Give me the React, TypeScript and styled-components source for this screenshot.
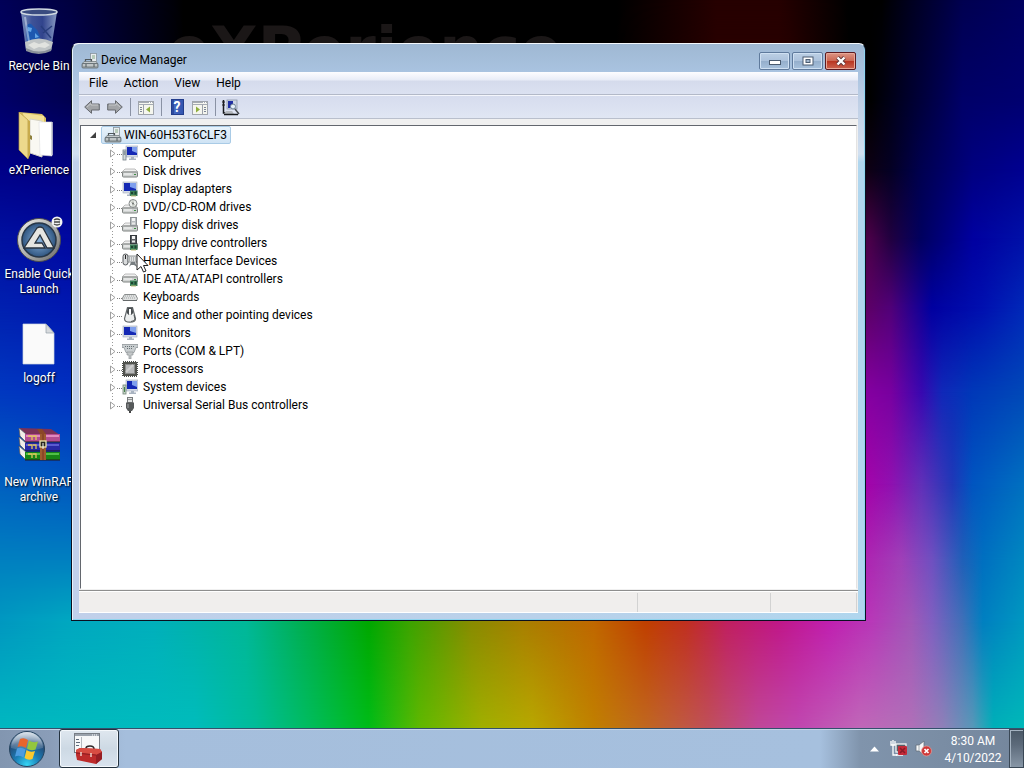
import React from "react";
import styled, { createGlobalStyle, css } from "styled-components";

const GlobalStyle = createGlobalStyle`
  *, *::before, *::after { box-sizing: border-box; }
  html, body, #root { height: 100%; margin: 0; }
  body { overflow: hidden; background: #000; font-family: Roboto, "Open Sans", sans-serif; font-size: 12px; line-height: 15px; }
  button { font: inherit; color: inherit; }
  ul { list-style: none; margin: 0; padding: 0; }
  svg { display: block; flex: none; }
`;

/* ---------- wallpaper ---------- */

type Band = { from: number; to: number; stops: string };

/* Each band is a horizontal colour sweep that fades in between two heights. */
const bands: Band[] = [
  { from: 0, to: 13, stops: "#000068 0%, #000050 7%, #000008 17%, #000 18%, #000 60%, #2a0000 70%, #2a0000 77%, #000 83%, #000 85%, #000030 89%, #000068 94%, #000070 100%" },
  { from: 13, to: 22, stops: "#000088 0%, #000080 7%, #000 18%, #300000 76%, #10000c 84%, #040024 87%, #000050 90%, #000080 95%, #000090 100%" },
  { from: 22, to: 31, stops: "#0010a0 0%, #0008a0 7%, #000 18%, #500030 80%, #480048 85%, #200040 87%, #000060 90%, #0000a0 95%, #0010a8 100%" },
  { from: 31, to: 40, stops: "#0020b0 0%, #0018b0 7%, #000 18%, #600060 84%, #500078 87%, #0000a0 91%, #0010b0 96%, #0028b8 100%" },
  { from: 40, to: 51, stops: "#0038c0 0%, #0030c0 7%, #000 18%, #8800a0 84%, #7800a0 87%, #3808b0 90%, #1028b8 92%, #0038b8 95%, #0048b8 100%" },
  { from: 51, to: 63, stops: "#0060c0 0%, #0058c0 7%, #004080 18%, #a800a8 84%, #9010b0 87%, #6030b8 90%, #2038b8 93%, #0055c0 95%, #0070c0 100%" },
  { from: 63, to: 73, stops: "#0080c0 0%, #0080c0 7%, #006080 18%, #b020b0 84%, #a040b8 88%, #7050c0 91%, #2060b8 94%, #0070c0 96%, #0088c0 100%" },
  { from: 73, to: 81, stops: "#0098c0 0%, #00a8c0 7%, #00b0bc 15%, #00b898 24%, #00b058 29%, #00a800 36%, #3ca400 40%, #888c00 46%, #a88000 51%, #c06800 58%, #c04000 63%, #c03020 67%, #c02060 71%, #c01888 76%, #c020b0 81%, #b838b8 85%, #a058b8 89%, #8060c0 91%, #4070b8 94%, #0080c0 96%, #0098c0 100%" },
  { from: 81, to: 95, stops: "#00b8c0 0%, #00bcbc 19%, #00bc98 25%, #00bc60 30%, #00bc18 36%, #60b800 41%, #a0b000 47%, #b8a800 52%, #c08000 58%, #c06820 63%, #c05058 69%, #c04898 74%, #c048b0 78%, #c068b8 84%, #b070b8 89%, #9080b8 92%, #5898b8 95%, #00b0b8 97%, #00b8b8 100%" },
];

const Desktop = styled.main`
  position: relative;
  height: 100vh;
  display: flex;
  flex-direction: column;
  overflow: hidden;
  background: linear-gradient(90deg, #000058, #000040 7%, #000008 17%, #000 18%, #000 60%, #260000 70%, #260000 76%, #000 83%, #000 86%, #000020 89%, #000050 94%, #000060);
`;

const WallpaperBand = styled.div<{ $band: Band }>`
  position: absolute;
  inset: 0;
  background: linear-gradient(90deg, ${(p) => p.$band.stops});
  mask-image: linear-gradient(180deg, transparent ${(p) => p.$band.from}%, #000 ${(p) => p.$band.to}%);
`;

const WallpaperTitle = styled.div`
  position: absolute;
  left: 168px;
  top: 15px;
  font: bold 62px/70px "DejaVu Sans", sans-serif;
  color: #1b1717;
`;

/* ---------- desktop shortcuts ---------- */

const Shortcuts = styled.ul`
  position: relative;
  flex: 1;
  min-height: 0;
  padding-top: 5px;
`;

const Shortcut = styled.button`
  display: flex;
  flex-direction: column;
  align-items: center;
  gap: 4px;
  width: 78px;
  height: 104px;
  padding: 2px 0 0;
  border: 0;
  background: none;
  color: #fff;
  text-align: center;
  text-shadow: 1px 1px 2px #000;
`;

/* ---------- window ---------- */

const Window = styled.section`
  position: absolute;
  left: 71px;
  right: 158px;
  top: 43px;
  bottom: 147px;
  display: flex;
  flex-direction: column;
  padding: 0 7px 7px;
  border: 1px solid #0a1020;
  border-top-color: #f4f8fc;
  border-radius: 7px 7px 0 0;
  background:
    linear-gradient(180deg, #9fb8d3 0, #a9c3e0 28px, #c0d0e6 60px, #d2e0f0 110px, transparent 118px),
    linear-gradient(90deg, #c1d0ea, #b9d1ea 60%, #b0d6ee);
  box-shadow: inset 1px 0 #e8f2fa, inset -1px -1px #8fd4ee;
`;

const TitleBar = styled.header`
  display: flex;
  align-items: center;
  gap: 2px;
  height: 28px;
  padding: 5px 2px 0;
  color: #000;
`;

const Title = styled.h1`
  flex: 1;
  margin: 0;
  font-size: 12px;
  font-weight: 400;
`;

const WindowControls = styled.div`
  display: flex;
  gap: 2px;
`;

const ControlButton = styled.button<{ $danger?: boolean }>`
  display: grid;
  place-items: center;
  width: 31px;
  height: 18px;
  padding: 0;
  border: 1px solid ${(p) => (p.$danger ? "#5c1a20" : "#5f7a9c")};
  border-radius: 2px;
  box-shadow: inset 0 0 0 1px ${(p) => (p.$danger ? "#e8a898" : "#cfe0f2")};
  background: ${(p) =>
    p.$danger
      ? "linear-gradient(180deg, #dc9484, #cc6854 48%, #b83420 50%, #cc6450)"
      : "linear-gradient(180deg, #bccfe4, #acc2dc 48%, #94aecb 50%, #a8c2dd)"};
`;

const Client = styled.div`
  flex: 1;
  min-height: 0;
  display: flex;
  flex-direction: column;
  background: #f0f0f0;
  border-bottom: 1px solid #fff;
`;

const MenuBar = styled.nav`
  display: flex;
  height: 23px;
  padding-left: 2px;
  background: linear-gradient(180deg, #fdfdff 0, #e8ecf7 8px, #d5dbec 9px, #dbe1f1 100%);
  border-bottom: 1px solid #b3b9c8;
`;

const MenuItem = styled.button`
  padding: 0 8px;
  border: 0;
  background: none;
  color: #000;
`;

const ToolBar = styled.div`
  display: flex;
  align-items: center;
  height: 24px;
  padding: 0 4px;
  gap: 5px;
  background: linear-gradient(180deg, #d6dcee, #e0e6f3);
  border-top: 1px solid #f4f6fc;
  border-bottom: 1px solid #b9bfcc;
`;

const ToolButton = styled.button`
  display: grid;
  place-items: center;
  width: 18px;
  height: 22px;
  padding: 0;
  border: 0;
  background: none;
`;

const ToolDivider = styled.span`
  width: 1px;
  height: 18px;
  margin: 0 1px;
  background: #8a92a4;
`;

const TreePane = styled.div`
  flex: 1;
  min-height: 0;
  margin: 6px 1px 1px;
  border: 1px solid #fff;
  border-top-color: #63676e;
  border-left-color: #63676e;
  border-right-color: #e3e3e3;
  background: #fff;
  overflow: hidden;
`;

const rowLayout = css`
  display: flex;
  align-items: center;
  height: 18px;
`;

const RootRow = styled.div`
  ${rowLayout}
  padding-left: 8px;
  gap: 4px;
`;

const RootLabel = styled.button`
  ${rowLayout}
  gap: 2px;
  padding: 0 3px 0 2px;
  border: 1px solid #a9cbe6;
  border-radius: 2px;
  background: linear-gradient(180deg, #e8f3fb, #cfe3f4);
  color: #000;
`;

const Branches = styled.ul`
  margin-left: 28px;
`;

const Branch = styled.li`
  ${rowLayout}
  background: repeating-linear-gradient(180deg, #9a9a9a 0 1px, transparent 1px 3px) 3px 0 / 1px 100% no-repeat;
  &:last-child { background-size: 1px 50%; }
`;

const Expander = styled.button`
  display: grid;
  place-items: center;
  width: 8px;
  height: 11px;
  padding: 0;
  border: 0;
  background: #fff;
`;

const Dots = styled.span`
  width: 5px;
  margin-top: 2px;
  border-top: 1px dotted #808080;
`;

const BranchLabel = styled.button`
  ${rowLayout}
  gap: 5px;
  padding: 0;
  border: 0;
  background: none;
  color: #000;
  white-space: nowrap;
`;

const StatusBar = styled.footer`
  display: flex;
  height: 22px;
  padding-right: 1px;
  border-top: 1px solid #8e8e8e;
  box-shadow: inset 0 1px #fff;
  background: #f0eeed;
`;

const StatusPane = styled.div<{ $width?: number }>`
  flex: ${(p) => (p.$width ? `0 0 ${p.$width}px` : "1")};
  margin-top: 2px;
  border-right: 1px solid #d2d2d2;
`;

const Pointer = styled.svg`
  position: absolute;
  left: 136px;
  top: 253px;
`;

/* ---------- taskbar ---------- */

const Taskbar = styled.footer`
  position: relative;
  display: flex;
  height: 40px;
  border-top: 1px solid #34506c;
  box-shadow: inset 0 1px #c4d4e6;
  background: linear-gradient(90deg, #8296b0 0, #8a9db8 50px, #a5bedc 125px, #a6c0de 820px, #8094ac 860px, #74869c 100%);
`;

const StartButton = styled.button`
  width: 59px;
  padding: 2px 0 0 8px;
  border: 0;
  background: none;
`;

const TaskButton = styled.button`
  display: grid;
  place-items: center;
  width: 60px;
  padding: 0;
  border: 1px solid #24323f;
  border-radius: 3px;
  box-shadow: inset 0 0 0 1px #f4f8fc;
  background: linear-gradient(180deg, #dfe7ef, #cdd9e4 50%, #d9e3ee);
`;

const Tray = styled.div`
  display: flex;
  align-items: center;
  gap: 8px;
  margin-left: auto;
`;

const TrayButton = styled.button`
  padding: 0;
  border: 0;
  background: none;

  &:first-child { margin-right: 3px; }
`;

const Clock = styled.time`
  width: 72px;
  margin-left: -3px;
  padding-top: 2px;
  color: #fff;
  text-align: center;
  line-height: 17px;
`;

const ShowDesktop = styled.button`
  align-self: stretch;
  width: 15px;
  margin-left: -8px;
  padding: 0;
  border: 1px solid #3a4856;
  box-shadow: inset 1px 1px #a4b2c0;
  background: linear-gradient(180deg, #4a5866, #5c6a7a 40%, #8796a6);
`;

/* ---------- drawings: desktop ---------- */

const RecycleBin = () => (
  <svg width="48" height="48" viewBox="0 0 48 48">
    <defs>
      <linearGradient id="bin" x1="0" x2="1"><stop offset="0" stopColor="#8fa6cc" /><stop offset=".3" stopColor="#4a62a4" /><stop offset=".6" stopColor="#3a5098" /><stop offset="1" stopColor="#a0b5d8" /></linearGradient>
    </defs>
    <path d="M6 5 L11 43 Q24 49 36 43 L42 5 Z" fill="url(#bin)" opacity=".85" />
    <path d="M11 19 q4 -5 7 0 l4 4 3 6 -1 6 -7 -2 -5 2z" fill="#1d58b0" />
    <path d="M13 20l4 1 -1 4 -3-1z M20 26l4 4-4 1z" fill="#63a5e6" />
    <path d="M28 26l9-7M26 19l5 6 5 6" stroke="#283d7c" strokeWidth="1.500" fill="none" />
    <path d="M10 35 Q24 28 38 35 L36 43 Q24 49 11 43Z" fill="#c0c5c6" />
    <path d="M13 38l6-3 5 2 6-2 5 3-5 3-6-1-5 2z" fill="#e1e3df" />
    <path d="M11 41 Q24 48 37 41 L36 44 Q24 50 11 44Z" fill="#8b929b" />
    <ellipse cx="24" cy="5" rx="18" ry="3" fill="#3a4c80" stroke="#d1dae2" strokeWidth="1.500" />
    <path d="M10 10l4 25" stroke="#dce7f6" strokeWidth="2" opacity=".5" />
  </svg>
);

const Folder = () => (
  <svg width="48" height="48" viewBox="0 0 48 48">
    <path d="M4 1 L27 3 L31 7 V20 L13 38Z" fill="#d8c061" />
    <path d="M8 2 L29 5 V34 L14 42Z" fill="#f3e197" />
    <path d="M15 8l12 2v36l-12-4z" fill="#f9f8f2" stroke="#d5d2c5" />
    <path d="M24 11h13v34l-12-1z" fill="#fff" stroke="#ddd" strokeWidth=".6" />
    <path d="M37 11v33" stroke="#c6c9d2" strokeWidth="1.500" />
    <path d="M4 1 L13 9 V48 L4 39Z" fill="#edd98c" stroke="#b8993d" strokeWidth=".7" />
    <path d="M13 9l2 1v34l-2 4z" fill="#c8ab4c" />
    <path d="M15 24l2 1v4l-2-1z" fill="#8e803d" />
  </svg>
);

const AutoIt = () => (
  <svg width="48" height="48" viewBox="0 0 48 48">
    <defs>
      <linearGradient id="ring" x1="0" y1="0" x2="1" y2="1"><stop stopColor="#f1f1ee" /><stop offset=".6" stopColor="#a4a5a2" /><stop offset="1" stopColor="#666" /></linearGradient>
      <radialGradient id="disc"><stop stopColor="#8ab4de" /><stop offset="1" stopColor="#2f5580" /></radialGradient>
    </defs>
    <circle cx="24" cy="25" r="21.500" fill="url(#ring)" stroke="#4c4d4e" />
    <circle cx="24" cy="25" r="17" fill="url(#disc)" stroke="#273748" strokeWidth="1.500" />
    <path d="M22 13 Q25 11 28 13 L39 33 H32 L25 20 L20 28 H27 L30 33 H9 Z" fill="#e6e6e2" stroke="#29333f" strokeWidth="1.300" />
    <circle cx="42" cy="7" r="5.500" fill="#f2f3f3" />
    <path d="M39 5q3-2 6 0M45 9q-3 2-6 0M39 7h6" fill="none" stroke="#444" strokeWidth="1.300" />
  </svg>
);

const BlankFile = () => (
  <svg width="48" height="48" viewBox="0 0 48 48">
    <path d="M8 5H31L39 14V45H8Z" fill="#fafafa" stroke="#ccd5df" strokeWidth=".7" />
    <path d="M31 5V14H39Z" fill="#d7dadd" stroke="#929da8" strokeWidth=".7" />
  </svg>
);

const books = [
  { y: 11, base: "#b44c91", light: "#e08abd" },
  { y: 20, base: "#2828a5", light: "#5a5bd0" },
  { y: 29, base: "#178516", light: "#50c048" },
];

const WinRar = () => (
  <svg width="48" height="48" viewBox="0 0 48 48">
    <path d="M4 5L36 6 45 12H12Z" fill="#7b3158" />
    {books.map((b) => (
      <g key={b.y}>
        <path d={`M4 ${b.y - 6} L11 ${b.y} V${b.y + 8} L5 ${b.y + 2}Z`} fill="#f1eee9" stroke="#5c5658" strokeWidth=".7" />
        <rect x="10" y={b.y} width="35" height="8" fill={b.base} />
        <rect x="11" y={b.y + 1} width="33" height="2" fill={b.light} />
        <path d={`M13 ${b.y + 2}h4v4M18 ${b.y + 2}h3v4`} stroke="#e4c659" fill="none" strokeWidth="1.300" />
        <path d={`M10 ${b.y + 8}h35`} stroke="#241721" />
      </g>
    ))}
    <path d="M22 6h5l4 5v26h-6V11z" fill="#8b4727" />
    <path d="M26 11v26M30 11v26" stroke="#b07038" />
    <rect x="25" y="18" width="6" height="6" fill="#26251d" stroke="#eee5ad" strokeWidth="1.300" />
    <path d="M28 20v6" stroke="#fff" />
  </svg>
);

const shortcuts = [
  { label: "Recycle Bin", icon: <RecycleBin /> },
  { label: "eXPerience", icon: <Folder /> },
  { label: "Enable Quick Launch", icon: <AutoIt /> },
  { label: "logoff", icon: <BlankFile /> },
  { label: "New WinRAR archive", icon: <WinRar /> },
];

/* ---------- drawings: devices ---------- */

const Icon16 = ({ children }: { children: React.ReactNode }) => (
  <svg width="16" height="16" viewBox="0 0 16 16">{children}</svg>
);

const DriveShape = ({ y = 9 }: { y?: number }) => (
  <g>
    <path d={`M3 ${y - 3}h10l3 3H0z`} fill="#f0f0f0" stroke="#a4a4a4" strokeWidth=".7" />
    <rect x=".5" y={y} width="15" height="5" rx="1" fill="#d0d3d2" stroke="#7e8280" />
    <path d={`M2 ${y + 2}h8`} stroke="#f9f9f9" />
    <rect x="12" y={y + 2} width="2" height="1" fill="#3e8c45" />
  </g>
);

const ScreenShape = ({ x = 1, w = 14 }: { x?: number; w?: number }) => (
  <g>
    <rect x={x} y="1" width={w} height="11" fill="#d4dbe6" stroke="#a0aabb" strokeWidth=".6" />
    <rect x={x + 1} y="2" width={w - 2} height="8" fill="#1428b4" />
    <path d={`M${x + w / 2} 2H${x + w - 1}V8L${x + w / 2} 6z`} fill="#7f9fee" />
    <path d={`M${x + w / 2 - 1} 12h3v1.500h2v1.500h-7v-1.500h2z`} fill="#a9b4c1" />
  </g>
);

const CardShape = () => (
  <g>
    <rect x="8" y="9.500" width="7.500" height="5.500" fill="#3c8058" />
    <path d="M9 11h2v2H9zM12.500 10.500h2v3h-2z" fill="#1c4430" />
    <path d="M9 15h5" stroke="#c4bc76" />
  </g>
);

const ComputerIcon = () => (
  <Icon16><ScreenShape x={4} w={12} /><rect x="1" y="5" width="3" height="10" fill="#d3dadd" stroke="#768087" strokeWidth=".8" /><path d="M1.500 7h2M1.500 9h2" stroke="#4e5d68" /></Icon16>
);
const DiskIcon = () => <Icon16><DriveShape /></Icon16>;
const DisplayIcon = () => <Icon16><ScreenShape /><CardShape /></Icon16>;
const OpticalIcon = () => (
  <Icon16><DriveShape /><circle cx="11" cy="4.500" r="4" fill="#edf0ed" stroke="#858989" /><path d="M8 2l6 5M11 1v7" stroke="#b5b9b1" /><circle cx="11" cy="4.500" r="1" fill="#6e7371" /></Icon16>
);
const FloppyShape = ({ dark }: { dark?: boolean }) => (
  <g><rect x="8.500" y=".5" width="6" height="8" fill={dark ? "#5a5e62" : "#b9bdc0"} stroke={dark ? "#35393d" : "#8f9396"} /><rect x="10" y="1" width="3" height="3" fill="#f4f4f4" /><path d="M10 6.500h3" stroke="#e8e8e8" strokeWidth="2" /></g>
);
const FloppyIcon = () => <Icon16><DriveShape /><FloppyShape /></Icon16>;
const FloppyControllerIcon = () => <Icon16><DriveShape /><FloppyShape dark /><CardShape /></Icon16>;
const HidIcon = () => (
  <Icon16>
    <rect x="1" y="1" width="5" height="11" rx="2.500" fill="#d9dbdc" stroke="#55595c" /><path d="M3.500 2v4" stroke="#222" />
    <rect x="6" y="3" width="10" height="6" fill="#e0e2e2" stroke="#767a7d" strokeWidth=".8" /><path d="M7 5h8M7 7h8" stroke="#7f8386" strokeDasharray="1 1" />
    <path d="M7 14l2-5h4l2 5-3-2H9z" fill="#777d80" />
  </Icon16>
);
const IdeIcon = () => <Icon16><DriveShape y={6} /><CardShape /></Icon16>;
const KeyboardIcon = () => (
  <Icon16><path d="M2.500 5.500h11l2 4-1 2H1L.5 9z" fill="#dfe1e1" stroke="#8a8e8e" /><path d="M3 7h10M2 9h12" stroke="#a0a4a4" strokeDasharray="1 1" /><path d="M1 11.500h14" stroke="#65696a" /></Icon16>
);
const MouseIcon = () => (
  <Icon16><path d="M5.500 .7h5l3 11q0 3.500-5.500 3.500t-5.500-3.500z" fill="#eceeee" stroke="#63686a" strokeWidth="1.200" /><path d="M5.500 1L4.800 6l2 2 1.200-2 1.200 2 2-2-.7-5z" fill="#484d50" /><rect x="7" y="2" width="2" height="5" fill="#fff" /><path d="M12 8l1 4q0 2-4 2.500" stroke="#54595b" fill="none" /></Icon16>
);
const MonitorIcon = () => <Icon16><ScreenShape /></Icon16>;
const PortIcon = () => (
  <Icon16><path d="M0 1.500h16v3h-2l-2 5H4l-2-5H0z" fill="#c9ced0" stroke="#8f9699" strokeWidth=".8" /><path d="M3 3.500h10M5 5.500h6" stroke="#697277" strokeDasharray="1 1" /><path d="M5 9h6v3H9v4H7v-4H5z" fill="#c3c7c8" stroke="#8f9699" strokeWidth=".7" /></Icon16>
);
const CpuIcon = () => (
  <Icon16><rect x="1" y="1" width="14" height="14" fill="none" stroke="#484a49" strokeWidth="2" strokeDasharray="1 1" /><rect x="1" y="1" width="14" height="14" fill="#51534e" /><rect x="3.500" y="3.500" width="9" height="9" fill="#b9babb" stroke="#8a8b8b" /><path d="M4 11l7-7" stroke="#cecece" strokeWidth="2" /></Icon16>
);
const SystemIcon = () => (
  <Icon16><ScreenShape x={4} w={12} /><rect x="1" y="6" width="3" height="9" fill="#c7d4c8" stroke="#718477" strokeWidth=".8" /><path d="M2.500 8v5" stroke="#45824c" /></Icon16>
);
const UsbIcon = () => (
  <Icon16><rect x="5.500" y=".5" width="5" height="5" fill="#e1e3e3" stroke="#777a7b" /><path d="M7 2v1M9 2v1" stroke="#444" /><path d="M4 5.500h8V11l-2 3H6l-2-3z" fill="#56595a" /><path d="M6 7v4" stroke="#a4a7a8" /><path d="M8 14v2" stroke="#444" strokeWidth="2" /></Icon16>
);

const ManagerIcon = () => (
  <svg width="18" height="16" viewBox="0 0 18 16">
    <rect x="9.500" y=".5" width="6" height="9" fill="#e9edef" stroke="#88959d" strokeWidth=".8" />
    <path d="M11 3h3M11 5h3" stroke="#86aa84" />
    <path d="M4.500 9V6.500h6V9" fill="none" stroke="#50585c" strokeWidth="1.200" />
    <path d="M3 8.500h12l2 2.500H1z" fill="#c5cbcd" stroke="#697276" strokeWidth=".7" />
    <rect x="1" y="10.500" width="16" height="4.500" rx="1" fill="#9aa2a5" stroke="#606a6e" strokeWidth=".8" />
    <path d="M2 12h14" stroke="#e4e8e8" /><path d="M5 11v3M13 11v3" stroke="#515a5d" />
  </svg>
);

const devices = [
  { label: "Computer", icon: <ComputerIcon /> },
  { label: "Disk drives", icon: <DiskIcon /> },
  { label: "Display adapters", icon: <DisplayIcon /> },
  { label: "DVD/CD-ROM drives", icon: <OpticalIcon /> },
  { label: "Floppy disk drives", icon: <FloppyIcon /> },
  { label: "Floppy drive controllers", icon: <FloppyControllerIcon /> },
  { label: "Human Interface Devices", icon: <HidIcon /> },
  { label: "IDE ATA/ATAPI controllers", icon: <IdeIcon /> },
  { label: "Keyboards", icon: <KeyboardIcon /> },
  { label: "Mice and other pointing devices", icon: <MouseIcon /> },
  { label: "Monitors", icon: <MonitorIcon /> },
  { label: "Ports (COM & LPT)", icon: <PortIcon /> },
  { label: "Processors", icon: <CpuIcon /> },
  { label: "System devices", icon: <SystemIcon /> },
  { label: "Universal Serial Bus controllers", icon: <UsbIcon /> },
];

/* ---------- drawings: toolbar ---------- */

const Arrow = ({ flip }: { flip?: boolean }) => (
  <svg width="16" height="16" viewBox="0 0 16 16">
    <g transform={flip ? "matrix(-1 0 0 1 16 0)" : undefined}>
      <path d="M.7 8L7.500 1.700V5h7.800v6H7.500v3.300z" fill="#a2a4a7" stroke="#66696e" />
      <path d="M3 8l4-3.500V6h7" fill="none" stroke="#c6c8ca" />
    </g>
  </svg>
);

const PaneGlyph = ({ right }: { right?: boolean }) => (
  <svg width="16" height="15" viewBox="0 0 16 15">
    <rect x=".5" y="1.500" width="15" height="13" fill="#f5f6ee" stroke="#a0a5ac" />
    <path d="M1 2.500h14M1 4.500h14" stroke="#a6abb4" /><path d="M11 2.500h1M13 2.500h1" stroke="#fff" />
    {right ? (
      <><path d="M10.500 5v9" stroke="#9ca1aa" /><path d="M12 7.500h2M12 9.500h2M12 11.500h2" stroke="#7b8596" /><path d="M4 6.500v6l4-3z" fill="#8fae3d" /></>
    ) : (
      <><path d="M5.500 5v9" stroke="#9ca1aa" /><path d="M2 7.500h2M2 9.500h2M2 11.500h2" stroke="#7b8596" /><path d="M12 6.500v6l-4-3z" fill="#8fae3d" /></>
    )}
  </svg>
);

const HelpBook = styled.span`
  display: grid;
  place-items: center;
  width: 13px;
  height: 16px;
  border: 1px solid #233d8c;
  background: linear-gradient(90deg, #2c4aa0 2px, #4468c0 2px, #3355b0);
  color: #fff;
  font-size: 14px;
  font-weight: 700;
  line-height: 14px;
`;

const ScanGlyph = () => (
  <svg width="18" height="17" viewBox="0 0 18 17">
    <path d="M1.500 1v13H5" stroke="#15171b" strokeWidth="1.500" fill="none" /><path d="M0 3h3M0 6h3" stroke="#222" />
    <rect x="5" y="1" width="10" height="9" fill="#cdd6e4" stroke="#8a96a8" strokeWidth=".8" />
    <rect x="6" y="2" width="5" height="7" fill="#202fa4" />
    <circle cx="11" cy="7.500" r="2.500" fill="#e4f0f8" stroke="#6f8296" /><path d="M13 10l4 5" stroke="#44484d" strokeWidth="1.500" />
    <path d="M4 12h6l2 3H2z" fill="#b4b8bd" /><path d="M2 15.500h14" stroke="#17191c" strokeWidth="1.500" />
  </svg>
);

/* ---------- drawings: taskbar ---------- */

const StartOrb = () => (
  <svg width="38" height="38" viewBox="0 0 38 38">
    <defs>
      <radialGradient id="orb" cx=".5" cy=".95" r=".9"><stop stopColor="#35d5f5" /><stop offset=".4" stopColor="#1b7db5" /><stop offset=".75" stopColor="#234d7a" /><stop offset="1" stopColor="#7f9cb8" /></radialGradient>
      <linearGradient id="gloss" x1="0" y1="0" x2="0" y2="1"><stop stopColor="#fff" stopOpacity=".7" /><stop offset="1" stopColor="#fff" stopOpacity=".08" /></linearGradient>
    </defs>
    <circle cx="19" cy="18" r="17.500" fill="url(#orb)" stroke="#26445f" />
    <path d="M3 17a16 16 0 0 1 32 0Q19 22 3 17z" fill="url(#gloss)" />
    <path d="M12 8q4-2 8 1l-2 8q-4-3-8.500-1z" fill="#e7652c" />
    <path d="M21 9.500q4 3 9 1l-2.500 8q-4.500 2-8.500-1z" fill="#93c73e" />
    <path d="M9 17.500q4-2 8.500 1l-2 8q-4-3-8.500-1z" fill="#4c9ce0" />
    <path d="M18.500 19q4 3 8.500 1l-2.500 8q-4 2-8-1z" fill="#fbc92e" />
  </svg>
);

const ToolboxGlyph = () => (
  <svg width="32" height="34" viewBox="0 0 32 34">
    <rect x="1.500" y="1.500" width="25" height="19" fill="#f7f8f9" stroke="#777d85" />
    <path d="M2 3h24" stroke="#9aa2ac" strokeWidth="2" /><path d="M19 3h1M21 3h1M23 3h1" stroke="#fff" />
    <path d="M8.500 5v12" stroke="#b4b9bf" /><path d="M3 7.500h3M3 10.500h4M3 13.500h3" stroke="#5f6b7b" />
    <path d="M13 16.500q0-2.500 4-2.500t4 3" fill="none" stroke="#31292b" strokeWidth="1.600" />
    <path d="M3 18l4-2 20 1 2 3v7l-6 5-19-4-1-5z" fill="#bd2b2b" />
    <path d="M3 18l4-2 20 1 2 3-6 3-20-3z" fill="#d84c42" />
    <path d="M23 23v9l6-5v-7z" fill="#961e24" /><path d="M3 21l20 2" stroke="#8b1b20" />
    <path d="M8 20v4M18 21v4" stroke="#f5e9df" strokeWidth="1.300" />
  </svg>
);

const NetworkGlyph = () => (
  <svg width="17" height="17" viewBox="0 0 17 17">
    <rect x="6" y="4" width="10" height="8" fill="#56606a" stroke="#f4f4f4" strokeWidth="1.300" />
    <path d="M1 1v4h4V1M3 0v15h4" stroke="#fff" strokeWidth="1.300" fill="none" /><path d="M6 15h7" stroke="#fff" strokeWidth="1.500" />
    <rect x="8" y="6" width="9" height="9" rx="1" fill="#c42a38" /><path d="M10 8l5 5M15 8l-5 5" stroke="#8a1c28" strokeWidth="1.600" />
  </svg>
);

const VolumeGlyph = () => (
  <svg width="17" height="17" viewBox="0 0 17 17">
    <path d="M1 5h3l5-4v14l-5-4H1z" fill="#f5f7f8" stroke="#64707c" strokeWidth=".8" /><path d="M4 5v6" stroke="#a3aaaf" />
    <circle cx="11.500" cy="11" r="5" fill="#cf3838" stroke="#e6a09b" strokeWidth=".7" /><path d="M9.500 9l4 4M13.500 9l-4 4" stroke="#fff" strokeWidth="1.700" />
  </svg>
);

export default function App() {
  return (
    <Desktop>
      <GlobalStyle />
      {bands.map((band) => <WallpaperBand key={band.from} $band={band} />)}
      <WallpaperTitle>eXPerience</WallpaperTitle>

      <Shortcuts>
        {shortcuts.map((s) => (
          <li key={s.label}><Shortcut>{s.icon}<span>{s.label}</span></Shortcut></li>
        ))}
      </Shortcuts>

      <Window aria-label="Device Manager">
        <TitleBar>
          <ManagerIcon />
          <Title>Device Manager</Title>
          <WindowControls>
            <ControlButton aria-label="Minimize">
              <svg width="12" height="10" viewBox="0 0 12 10"><rect x=".5" y="4.500" width="11" height="4" fill="#fff" stroke="#4a5b70" /></svg>
            </ControlButton>
            <ControlButton aria-label="Maximize">
              <svg width="12" height="10" viewBox="0 0 12 10"><rect x="1" y="1" width="10" height="8" fill="#fff" stroke="#4a5b70" /><rect x="4" y="3.500" width="4" height="3" fill="#a4b8ce" stroke="#4a5b70" /></svg>
            </ControlButton>
            <ControlButton aria-label="Close" $danger>
              <svg width="12" height="10" viewBox="0 0 12 10"><path d="M2.500 1.500l7 7M9.500 1.500l-7 7" stroke="#5a3438" strokeWidth="4" /><path d="M2.500 1.500l7 7M9.500 1.500l-7 7" stroke="#fff" strokeWidth="2.400" /></svg>
            </ControlButton>
          </WindowControls>
        </TitleBar>

        <Client>
          <MenuBar aria-label="Menu">
            {["File", "Action", "View", "Help"].map((m) => <MenuItem key={m}>{m}</MenuItem>)}
          </MenuBar>
          <ToolBar role="toolbar">
            <ToolButton aria-label="Back"><Arrow /></ToolButton>
            <ToolButton aria-label="Forward"><Arrow flip /></ToolButton>
            <ToolDivider />
            <ToolButton aria-label="Show console tree"><PaneGlyph /></ToolButton>
            <ToolDivider />
            <ToolButton aria-label="Help"><HelpBook>?</HelpBook></ToolButton>
            <ToolButton aria-label="Show action pane"><PaneGlyph right /></ToolButton>
            <ToolDivider />
            <ToolButton aria-label="Scan for hardware changes"><ScanGlyph /></ToolButton>
          </ToolBar>

          <TreePane>
            <RootRow>
              <Expander aria-label="Collapse">
                <svg width="8" height="8" viewBox="0 0 8 8"><path d="M7 1v6H1z" fill="#404040" /></svg>
              </Expander>
              <RootLabel><ManagerIcon />WIN-60H53T6CLF3</RootLabel>
            </RootRow>
            <Branches>
              {devices.map((d) => (
                <Branch key={d.label}>
                  <Expander aria-label={`Expand ${d.label}`}>
                    <svg width="8" height="9" viewBox="0 0 8 9"><path d="M1.500 1v7L6 4.500z" fill="#fff" stroke="#a0a0a0" /></svg>
                  </Expander>
                  <Dots />
                  <BranchLabel>{d.icon}{d.label}</BranchLabel>
                </Branch>
              ))}
            </Branches>
          </TreePane>

          <StatusBar>
            <StatusPane />
            <StatusPane $width={133} />
            <StatusPane $width={86} />
          </StatusBar>
        </Client>
      </Window>

      <Taskbar>
        <StartButton aria-label="Start"><StartOrb /></StartButton>
        <TaskButton aria-label="Device Manager"><ToolboxGlyph /></TaskButton>
        <Tray>
          <TrayButton aria-label="Show hidden icons">
            <svg width="9" height="6" viewBox="0 0 9 6"><path d="M0 5.500L4.500.5 9 5.500z" fill="#fff" /></svg>
          </TrayButton>
          <TrayButton aria-label="Network"><NetworkGlyph /></TrayButton>
          <TrayButton aria-label="Volume"><VolumeGlyph /></TrayButton>
          <Clock>8:30 AM<br />4/10/2022</Clock>
          <ShowDesktop aria-label="Show desktop" />
        </Tray>
      </Taskbar>

      <Pointer width="13" height="20" viewBox="0 0 13 20">
        <path d="M1 1v16l4-3.500 2.500 5.500 2.500-1L7.500 12.500H12z" fill="#fff" stroke="#222" />
      </Pointer>
    </Desktop>
  );
}
